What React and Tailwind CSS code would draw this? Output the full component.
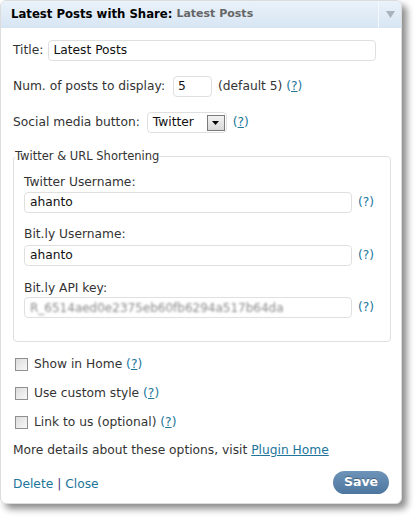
import React from "react";

const Help = ({ className = "", plain = false }) => (
  <span className={"text-[#21759b] " + className}>
    (<span className={plain ? "" : "underline"}>?</span>)
  </span>
);

const Check = ({ label }) => (
  <div className="flex items-center h-[13px]">
    <span className="w-[13px] h-[13px] border border-[#8f8f8f] bg-gradient-to-br from-[#dcdcdc] to-[#f8f8f8]" />
    <span className="ml-[6px]">
      {label} <Help />
    </span>
  </div>
);

const App = () => {
  return (
    <div className="w-[418px] h-[521px] bg-white font-['DejaVu_Sans',sans-serif] text-[12.25px] text-[#333]">
      <div className="w-[402px] h-[504px] rounded-[6px] border border-[#dcdcdc] bg-white shadow-[5px_5px_7px_rgba(0,0,0,0.45)] overflow-hidden">
        {/* header */}
        <div className="flex h-[27px] bg-gradient-to-b from-[#eaf2fa] to-[#d7e5f3]">
          <div className="flex-1 flex items-center pl-[10px] font-bold text-[11.7px] text-black">
            Latest Posts with Share<span>:</span>
            <span className="ml-[4px] text-[#666] text-[11px]">Latest Posts</span>
          </div>
          <div className="w-[23px] border-l border-[#f4f8fc] flex items-center justify-center">
            <svg width="9" height="7" viewBox="0 0 9 7">
              <path d="M0 0h9L4.5 7z" fill="#a9b3bd" />
            </svg>
          </div>
        </div>

        {/* body */}
        <div className="pl-[12px] pr-[10px] pt-[12px]">
          <div className="flex items-center h-[21px]">
            <span>Title:</span>
            <div className="ml-[5px] w-[328px] h-[21px] border border-[#dfdfdf] rounded-[4px] flex items-center px-[4px] text-[#111]">
              Latest Posts
            </div>
          </div>

          <div className="flex items-center h-[21px] mt-[15px]">
            <span>Num. of posts to display:</span>
            <div className="ml-[8px] w-[39px] h-[21px] border border-[#dfdfdf] rounded-[4px] flex items-center px-[4px] text-[#111]">
              5
            </div>
            <span className="ml-[6px]">
              (default 5) <Help />
            </span>
          </div>

          <div className="flex items-center h-[21px] mt-[15px]">
            <span>Social media button:</span>
            <div className="ml-[7px] w-[80px] h-[21px] border border-[#dfdfdf] rounded-[4px] flex items-center pl-[5px] pr-[1px] text-[#111]">
              <span className="flex-1">Twitter</span>
              <span className="w-[18px] h-[16px] border border-[#7a7a7a] bg-gradient-to-b from-[#f2f2f2] to-[#d8d8d8] flex items-center justify-center">
                <svg width="7" height="4" viewBox="0 0 7 4">
                  <path d="M0 0h7L3.5 4z" fill="#000" />
                </svg>
              </span>
            </div>
            <Help className="ml-[6px]" />
          </div>

          <fieldset className="mt-[16px] border border-[#dfdfdf] rounded-[4px] w-[378px] h-[193px] px-[10px]">
            <legend className="text-[11.5px] text-[#333] ml-[-9px] leading-[14px]">
              Twitter &amp; URL Shortening
            </legend>
            <div className="pt-[12px]">
              <div className="leading-[14px]">Twitter Username:</div>
              <div className="flex items-center h-[21px] mt-[3px]">
                <div className="w-[328px] h-[21px] border border-[#dfdfdf] rounded-[4px] flex items-center px-[5px] text-[#111]">
                  ahanto
                </div>
                <Help plain className="ml-[6px]" />
              </div>
              <div className="leading-[14px] mt-[14px]">Bit.ly Username:</div>
              <div className="flex items-center h-[21px] mt-[4px]">
                <div className="w-[328px] h-[21px] border border-[#dfdfdf] rounded-[4px] flex items-center px-[5px] text-[#111]">
                  ahanto
                </div>
                <Help plain className="ml-[6px]" />
              </div>
              <div className="leading-[14px] mt-[15px]">Bit.ly API key:</div>
              <div className="flex items-center h-[21px] mt-[2px]">
                <div className="w-[328px] h-[21px] border border-[#dfdfdf] rounded-[4px] flex items-center px-[5px] overflow-hidden">
                  <span className="blur-[1px] text-[#8a8a8a] text-[12px]">R_6514aed0e2375eb60fb6294a517b64da</span>
                </div>
                <Help plain className="ml-[6px] text-[#333]" />
              </div>
            </div>
          </fieldset>

          <div className="mt-[16px] pl-[2px] flex flex-col gap-[16px]">
            <Check label="Show in Home" />
            <Check label="Use custom style" />
            <Check label="Link to us (optional)" />
          </div>

          <div className="mt-[14px] leading-[14px]">
            More details about these options, visit{" "}
            <span className="text-[#21759b] underline">Plugin Home</span>
          </div>

          <div className="mt-[14px] flex items-center justify-between pr-[2px]">
            <div className="text-[#21759b] pt-[3px]">
              Delete <span className="text-[#4a3a78]">|</span> Close
            </div>
            <div className="w-[56px] h-[23px] rounded-full bg-gradient-to-b from-[#6e93b8] to-[#4d77a0] text-white font-bold text-[12.5px] flex items-center justify-center [text-shadow:0_-1px_0_rgba(0,0,0,0.3)]">
              Save
            </div>
          </div>
        </div>
      </div>
    </div>
  );
};

export default App;
